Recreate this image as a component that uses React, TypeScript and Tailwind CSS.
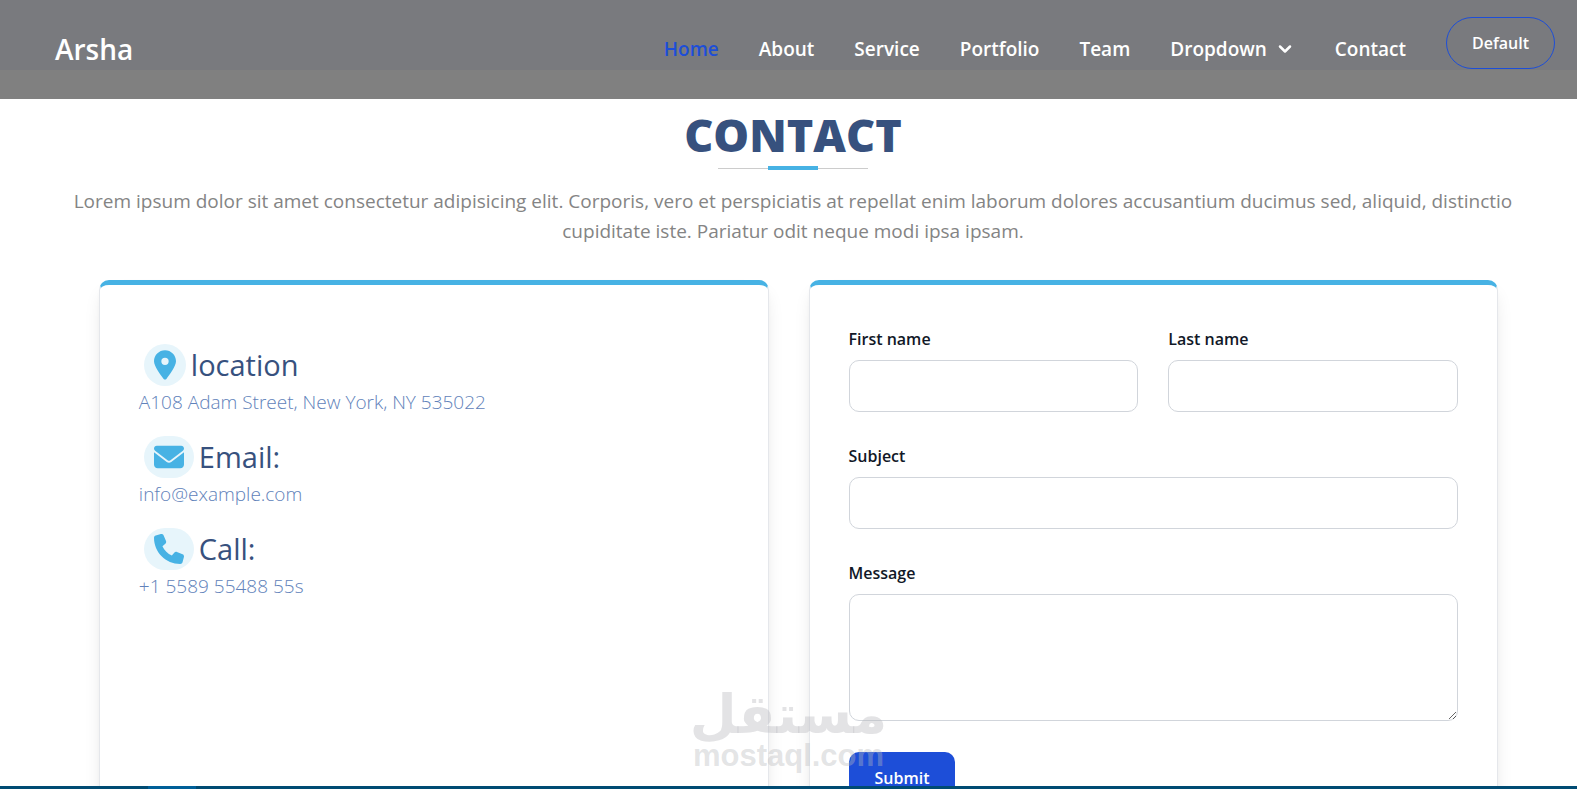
import { FaEnvelope, FaLocationDot, FaPhone } from "react-icons/fa6";
import { ChevronDown } from "lucide-react";
import type { ReactNode } from "react";

const linksBefore = ["About", "Service", "Portfolio", "Team"];

function NavBar() {
  return (
    <header className="flex h-[99px] shrink-0 items-center justify-between bg-[linear-gradient(#797a7e_70px,#808080_70px)] pr-[22px] pb-0.5 pl-[55px] text-white">
      <a href="#" className="text-[28px] leading-10 font-semibold">
        Arsha
      </a>
      <nav className="flex items-center gap-10 text-[19px] leading-8 font-semibold">
        <a href="#home" className="text-[#1d4ed8]">
          Home
        </a>
        {linksBefore.map((label) => (
          <a key={label} href={`#${label.toLowerCase()}`}>
            {label}
          </a>
        ))}
        <button type="button" className="flex items-center gap-2">
          Dropdown
          <ChevronDown className="size-5" strokeWidth={3} />
        </button>
        <a href="#contact">Contact</a>
        <button
          type="button"
          className="mb-3 h-[52px] rounded-full border border-[#1d4ed8] px-[25px] text-[16px] leading-6"
        >
          Default
        </button>
      </nav>
    </header>
  );
}

function SectionTitle() {
  return (
    <div className="flex flex-col items-center">
      <h1 className="text-[45px] leading-[50px] font-extrabold text-[#37517e]">
        CONTACT
      </h1>
      <div className="mt-1.5 flex h-1 w-[150px] items-center justify-center">
        <span className="h-px flex-1 bg-[#cccccc]" />
        <span className="h-1 w-[50px] bg-[#47b2e4]" />
        <span className="h-px flex-1 bg-[#cccccc]" />
      </div>
    </div>
  );
}

function InfoItem({ icon, title, text }: { icon: ReactNode; title: string; text: string }) {
  return (
    <div>
      <div className="flex h-11 items-center gap-[5px] pl-[5px]">
        <span className="flex h-[42px] items-center rounded-full bg-[#e7f5fb] px-[10px] text-[30px] text-[#47b2e4]">
          {icon}
        </span>
        <h2 className="text-[29px] leading-[44px] text-[#37517e]">{title}</h2>
      </div>
      <p className="text-[19px] leading-[30px] font-light text-[#6182ba]">{text}</p>
    </div>
  );
}

function TextField({ id, label }: { id: string; label: string }) {
  return (
    <div>
      <label htmlFor={id} className="mb-2 block text-[16px] leading-[26px] font-semibold text-[#111827]">
        {label}
      </label>
      <input
        id={id}
        type="text"
        className="block h-[52px] w-full rounded-[10px] border border-[#d1d5db] bg-white px-3 text-[16px]"
      />
    </div>
  );
}

function ContactForm() {
  return (
    <form className="flex flex-col gap-[31px]">
      <div className="grid grid-cols-2 gap-[30px]">
        <TextField id="first-name" label="First name" />
        <TextField id="last-name" label="Last name" />
      </div>
      <TextField id="subject" label="Subject" />
      <div>
        <label htmlFor="message" className="mb-2 block text-[16px] leading-[26px] font-semibold text-[#111827]">
          Message
        </label>
        <textarea
          id="message"
          className="block h-[127px] w-full rounded-[10px] border border-[#d1d5db] bg-white p-3 text-[16px]"
        />
      </div>
      <button
        type="submit"
        className="h-[52px] self-start rounded-[10px] bg-[#1d4ed8] px-[26px] text-[16px] leading-6 font-semibold text-white"
      >
        Submit
      </button>
    </form>
  );
}

function Watermark() {
  return (
    <div className="pointer-events-none absolute bottom-[17px] left-1/2 flex -translate-x-1/2 flex-col items-center font-bold text-[#b9babd]/40">
      <span lang="ar" dir="rtl" className="font-['DejaVu_Sans',sans-serif] text-[54px] leading-[50px]">
        مستقل
      </span>
      <span className="font-['Liberation_Sans',sans-serif] text-[31px] leading-8">mostaql.com</span>
    </div>
  );
}

export default function App() {
  return (
    <div className="relative flex h-screen flex-col overflow-hidden bg-white font-['Open_Sans',sans-serif]">
      <NavBar />
      <main className="min-h-0 flex-1 overflow-hidden pt-[11px]">
        <div className="pr-[60px] pl-[69px]">
          <SectionTitle />
          <p className="pt-4 text-center text-[19px] leading-[30px] text-[#848484]">
            Lorem ipsum dolor sit amet consectetur adipisicing elit. Corporis, vero et perspiciatis at repellat enim
            laborum dolores accusantium ducimus sed, aliquid, distinctio cupiditate iste. Pariatur odit neque modi ipsa
            ipsam.
          </p>
        </div>
        <div className="mx-[5%] mt-[34px] grid grid-cols-2">
          <div className="px-5">
            <section className="flex h-full flex-col gap-[18px] rounded-[10px] border border-t-5 border-[#e5e7eb] border-t-[#47b2e4] px-[39px] pt-[58px] shadow-[0_12px_18px_-3px_rgb(0_0_0/0.1),0_5px_7px_-4px_rgb(0_0_0/0.1)]">
              <InfoItem icon={<FaLocationDot className="w-[22px]" />} title="location" text="A108 Adam Street, New York, NY 535022" />
              <InfoItem icon={<FaEnvelope />} title="Email:" text="info@example.com" />
              <InfoItem icon={<FaPhone />} title="Call:" text="+1 5589 55488 55s" />
            </section>
          </div>
          <div className="pl-5">
            <section className="rounded-[10px] border border-t-5 border-[#e5e7eb] border-t-[#47b2e4] px-[39px] pt-[41px] pb-10 shadow-[0_12px_18px_-3px_rgb(0_0_0/0.1),0_5px_7px_-4px_rgb(0_0_0/0.1)]">
              <ContactForm />
            </section>
          </div>
        </div>
      </main>
      <Watermark />
      <footer className="flex h-[3px] shrink-0 bg-[#004b73] pl-[148px]">
        <span className="w-12 bg-[#005f98]" />
      </footer>
    </div>
  );
}
